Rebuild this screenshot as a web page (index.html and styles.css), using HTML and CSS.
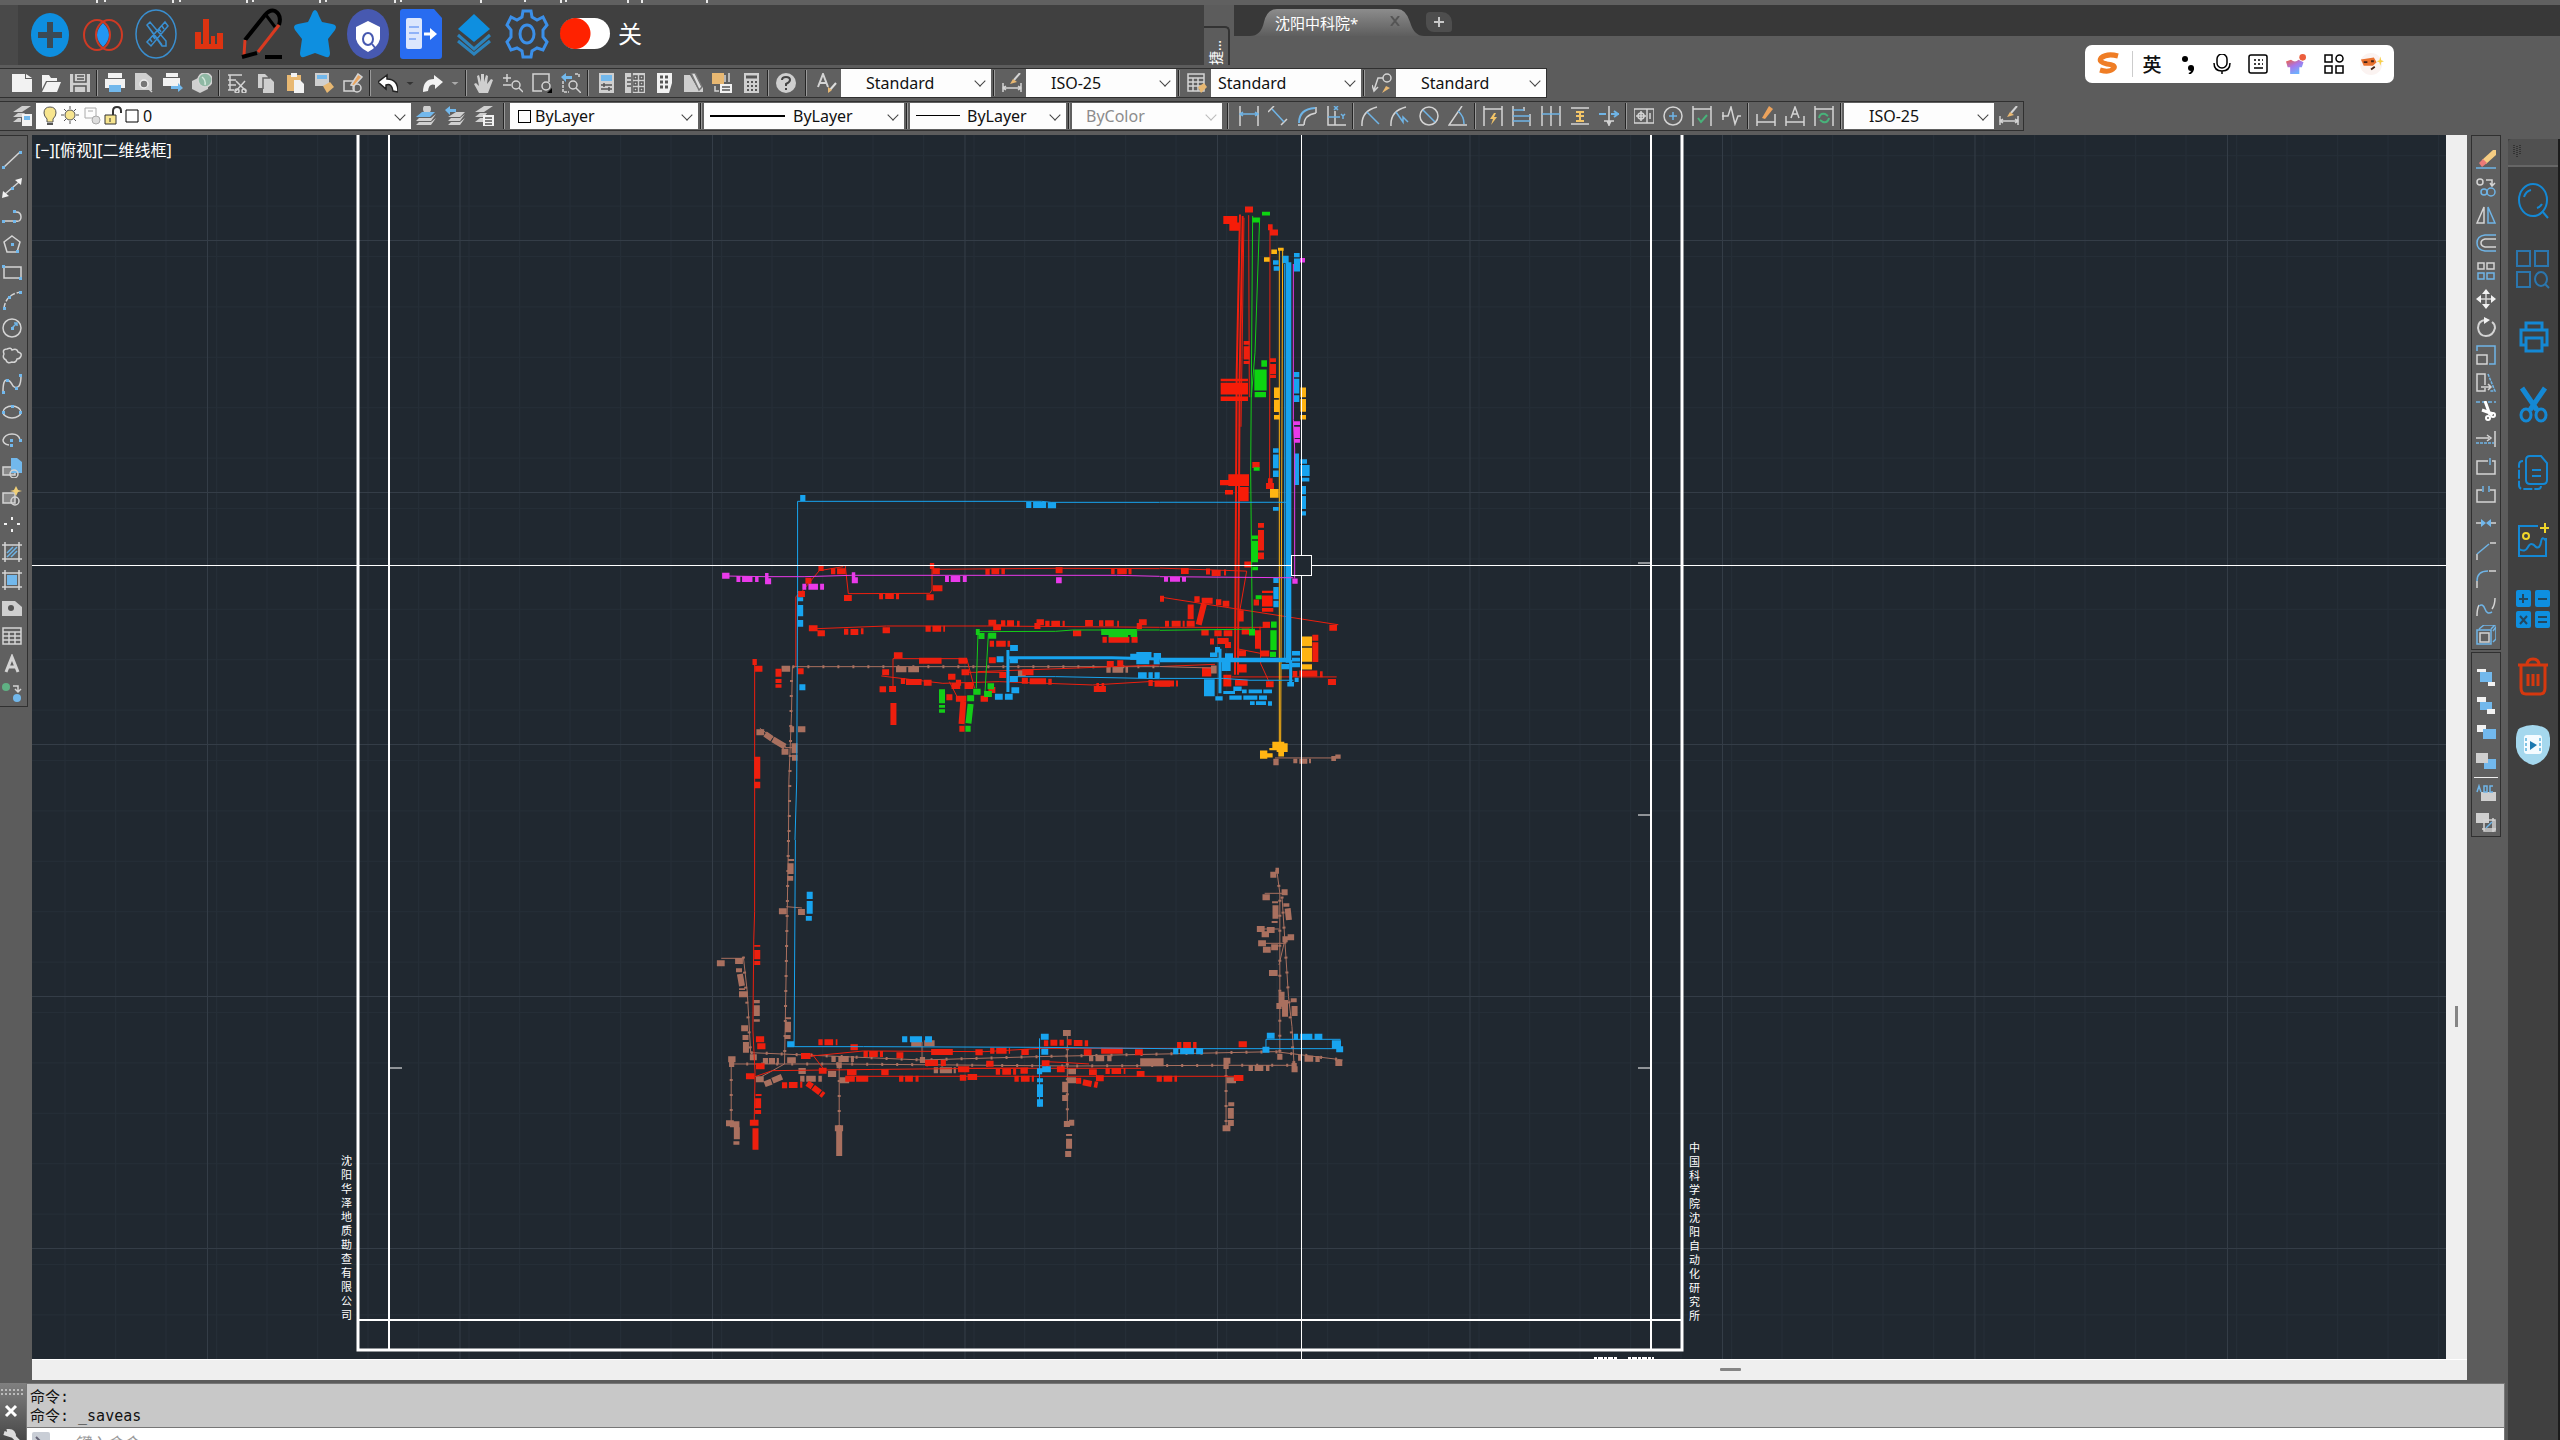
FILE: index.html
```html
<!DOCTYPE html>
<html lang="zh-CN">
<head>
    <meta charset="UTF-8">
    <meta name="viewport" content="width=device-width, initial-scale=1.0">
    <title>沈阳中科院</title>
    <link rel="stylesheet" href="styles.css">
</head>
<body>
    <div class="menu-edge">
        <svg width="720" height="5"><path d="M97 0v3M105 0v2M173 0v3M180 0v2M247 0v3M253 0v2M320 0v3M326 0v2M395 0v3M401 0v2M481 0v3M525 0v2M561 0v3M566 0v2M628 0v3M642 0v3M707 0v3"/></svg>
    </div>

    <header class="top">
        <div class="grip"></div>
        <nav class="quick">
            <button aria-label="新建"><svg viewBox="0 0 42 50"><ellipse cx="21" cy="26" rx="19" ry="22" fill="#0e8fe0"/><path d="M21 13v26M9 26h24" stroke="#3b4a55" stroke-width="6"/></svg></button>
            <button aria-label="交集"><svg viewBox="0 0 42 50"><path d="M21 14c8 8 8 16 0 24c-8-8-8-16 0-24z" fill="#2196f3"/><g stroke="#cf3a24" stroke-width="2"><ellipse cx="15" cy="26" rx="13" ry="15"/><ellipse cx="27" cy="26" rx="13" ry="15"/></g></svg></button>
            <button aria-label="设计"><svg viewBox="0 0 42 50" stroke="#3a8fd0" stroke-width="1.5"><ellipse cx="21" cy="25" rx="20" ry="24"/><path d="M12 16l3-3l16 19v5h-4zM12 16l15 20M30 13l3 4l-17 20l-4-4zM27 17l2 3M24 20l2 3M18 27l2 3M15 30l2 3"/></svg></button>
            <button aria-label="统计"><svg viewBox="0 0 42 50" fill="#dd3311"><path d="M7 23h6v12h2V10h6v25h2V27h4v8h2V24h6v16H7z"/></svg></button>
            <button aria-label="画笔"><svg viewBox="0 0 42 50" stroke-width="4"><path d="M4 31L24 6Q29 0 34 2Q41 6 38 16" stroke="#000"/><path d="M25 6l9 12" stroke="#000" stroke-width="3"/><path d="M4 31L3 46M38 16L17 43" stroke="#d93a20" stroke-width="3"/><path d="M1 48l15-4M24 48h17" stroke="#000"/></svg></button>
            <button aria-label="收藏"><svg viewBox="0 0 42 50" fill="#0e8fe0"><path d="M21 1Q23 1 25 7L28 13L38 15Q44 16 41 21L34 30L36 44Q36 49 32 48L21 44L10 48Q6 49 6 44L8 30L1 21Q-2 16 4 15L14 13L17 7Q19 1 21 1z"/></svg></button>
            <button aria-label="安全查询"><svg viewBox="0 0 42 50"><ellipse cx="21" cy="25" rx="21" ry="25" fill="#4759b0"/><path d="M21 12l12 6v12q-2 8-12 13q-10-5-12-13V18z" fill="#fff"/><ellipse cx="21" cy="30" rx="5" ry="6" stroke="#4759b0" stroke-width="2"/><path d="M25 35l4 5" stroke="#4759b0" stroke-width="2"/></svg></button>
            <button aria-label="导出"><svg viewBox="0 0 42 50"><path d="M3 0h31l8 9v38q0 3-3 3H3q-3 0-3-3V3q0-3 3-3z" fill="#286cf0"/><rect x="6" y="9" width="16" height="31" rx="2" fill="#dbe6fd"/><path d="M9 18h10M9 24h10M9 30h7" stroke="#8fb2f8" stroke-width="2"/><path d="M24 25h7" stroke="#fff" stroke-width="3"/><path d="M30 19l7 6l-7 6z" fill="#fff"/></svg></button>
            <button aria-label="图层"><svg viewBox="0 0 42 50"><path d="M21 5l16 15l-16 13L5 20z" fill="#0e8fe0"/><path d="M5 26l16 14l16-14M5 32l16 13l16-13" stroke="#2b83bd" stroke-width="3"/></svg></button>
            <button aria-label="设置"><svg viewBox="0 0 42 50" stroke="#3b8fe8" stroke-width="3"><ellipse cx="21" cy="25" rx="7" ry="9"/><path d="M17 2h8l1 6l5 3l6-3l4 8l-4 5v7l4 5l-4 8l-6-2l-5 3l-1 6h-8l-1-6l-5-3l-6 2l-4-8l4-5v-7l-4-5l4-8l6 3l5-3z"/></svg></button>
            <label class="switch"><input type="checkbox" role="switch"><span class="track"></span>关</label>
        </nav>
        <div class="side-tab"><span>捷…</span></div>
        <div class="files">
            <div class="file-strip">
                <a class="file-tab" href="#">
                    <svg class="tab-shape" viewBox="0 0 174 27" preserveAspectRatio="none"><defs><linearGradient id="tabfill" x2="0" y2="1"><stop offset="0" stop-color="#8c8c8c"/><stop offset="1" stop-color="#5e5e5e"/></linearGradient></defs><path d="M0 27Q11 27 14 13Q17 0 27 0H147Q156 0 160 13Q164 27 174 27z" fill="url(#tabfill)"/></svg>
                    <span>沈阳中科院*</span>
                </a>
                <button class="close" aria-label="关闭"><svg viewBox="0 0 10 10"><path d="M1 0l8 10M9 0l-8 10" stroke="#555" stroke-width="2"/></svg></button>
                <button class="plus" aria-label="新图形"><svg viewBox="0 0 12 12"><path d="M6 1v10M1 6h10" stroke="#c8c8c8" stroke-width="2"/></svg></button>
            </div>
        </div>
    </header>

    <div class="ime">
        <button class="logo" aria-label="搜狗"><svg viewBox="0 0 24 22"><path d="M21 3Q10 0 4 5Q1 9 10 11Q19 12 17 15Q13 20 3 17" stroke="#ef7d25" stroke-width="5"/></svg></button>
        <button class="lang">英</button>
        <button class="narrow" aria-label="标点"><svg viewBox="0 0 20 20"><g fill="#000"><circle cx="7" cy="5" r="3"/><circle cx="13" cy="14" r="3"/></g><path d="M15 14q0 4-4 6" stroke="#000" stroke-width="2"/></svg></button>
        <button class="narrow" aria-label="语音"><svg viewBox="0 0 20 20" stroke="#000" stroke-width="1.5"><rect x="5" y="0" width="10" height="14" rx="5"/><path d="M2 9q0 8 8 8t8-8M10 17v3"/></svg></button>
        <button aria-label="键盘"><svg viewBox="0 0 20 20" stroke="#000" stroke-width="1.5"><rect x="1" y="1" width="18" height="18" rx="2"/><path d="M6 6h9M6 10h9" stroke-dasharray="2"/><path d="M6 14h9"/></svg></button>
        <button aria-label="皮肤"><svg viewBox="0 0 24 24"><defs><linearGradient id="shirt" x2="0.6" y2="1"><stop offset="0" stop-color="#f0603c"/><stop offset=".5" stop-color="#a877ea"/><stop offset="1" stop-color="#6ab4ff"/></linearGradient></defs><path d="M6 7q5 4 9 0l6 3l-2 6h-3v8H5v-8H2L0 9z" fill="url(#shirt)"/><circle cx="20" cy="4" r="4" fill="#ec5e3c"/></svg></button>
        <button aria-label="工具"><svg viewBox="0 0 20 20" stroke="#000" stroke-width="1.5"><path d="M1 1h7v7H1zM1 12h7v7H1zM12 12h7v7h-7z"/><circle cx="15.500" cy="4.500" r="3.500"/></svg></button>
        <button aria-label="助手"><svg viewBox="0 0 26 26"><circle cx="12" cy="13" r="12" fill="#fbf3f1"/><path d="M1 8l14-2l3 5l-4 4H4z" fill="#e8702e"/><path d="M4 11h4M12 10h3M12 19l4-3" stroke="#402015" stroke-width="2"/><path d="M22 5l1 4l3 1l-3 1l-1 4l-1-4l-3-1l3-1z" fill="#f7cf4a"/></svg></button>
    </div>

    <div class="toolbars">
        <div class="bar bar-standard">
            <button aria-label="新建"><svg viewBox="0 0 20 20"><path class="f" d="M0 1h13v5h7v13H0z"/><path class="f" d="M14 1l6 4h-6z"/></svg></button>
            <button aria-label="打开"><svg viewBox="0 0 20 20"><path class="f" d="M1 2h7l2 3h6v3H5L1 16z"/><path class="f" d="M6 9h14l-4 10H1z"/></svg></button>
            <button aria-label="保存"><svg viewBox="0 0 20 20"><path class="g" d="M0 1h20v18H0z"/><path d="M4 1v8h12V1M7 3h7M7 6h7M4 19v-6h12v6" stroke="#555"/></svg></button>
            <i class="sep"></i>
            <button aria-label="打印"><svg viewBox="0 0 20 20"><path class="f" d="M3 0h14v5H3zM0 6h20v9H0z"/><path class="bf" d="M4 12h12v7H4z"/></svg></button>
            <button aria-label="打印预览"><svg viewBox="0 0 20 20"><path class="g" d="M1 0h11l6 5v12H1z"/><circle cx="10" cy="11" r="4" stroke="#eee" fill="#777"/><path d="M13 14l5 5"/></svg></button>
            <button aria-label="发布"><svg viewBox="0 0 20 20"><path class="f" d="M3 0h12v4H3zM0 5h17v8H0z"/><path class="bf" d="M8 13h7v-3l5 5l-5 4v-3H8z"/></svg></button>
            <button aria-label="三维打印"><svg viewBox="0 0 20 20"><path class="g" d="M0 8l8-4l8 4v8l-8 4l-8-4z"/><circle cx="13" cy="7" r="7" fill="#8fb8a4"/><path d="M10 4q4 3 3 8" stroke="#d4e8dc"/></svg></button>
            <i class="sep"></i>
            <button aria-label="剪切"><svg viewBox="0 0 20 20"><path d="M1 2h14M1 7h8M1 12h8M1 17h6M3 2v15M9 8l10 10M18 8L9 18"/><circle cx="10" cy="18" r="2"/><circle cx="17" cy="18" r="2"/></svg></button>
            <button aria-label="复制"><svg viewBox="0 0 20 20"><path class="g" d="M2 1h7l3 3v11H2z"/><path class="g" d="M7 5h7l4 4v11H7z"/><path d="M7 16V5h7" stroke="#666"/></svg></button>
            <button aria-label="粘贴"><svg viewBox="0 0 20 20"><path class="o" d="M2 2h14v16H2z"/><path class="f" d="M6 0h6v4H6zM9 7h6l4 4v9H9z"/></svg></button>
            <button aria-label="特性匹配"><svg viewBox="0 0 20 20"><path class="g" d="M1 0h14v13H1z"/><path class="bf" d="M3 2h10v4H3z"/><path class="o" d="M9 13l7-4l4 5l-7 6z"/></svg></button>
            <button aria-label="块编辑器"><svg viewBox="0 0 20 20"><path d="M1 18V8h10v10z"/><circle cx="14" cy="15" r="4"/><path d="M8 12l7-11l4 3l-8 9z" fill="#e9a560"/></svg></button>
            <i class="sep"></i>
            <button aria-label="放弃"><svg viewBox="0 0 20 20"><path d="M9 2L0 9l8 7v-4q6-2 7 6l5 1Q20 6 9 6z" fill="#fff" stroke="#222"/></svg></button>
            <button class="drop" aria-label="放弃列表"><svg viewBox="0 0 20 20"><path d="M3 8h14l-7 6z" fill="#333" stroke="none"/></svg></button>
            <button aria-label="重做"><svg viewBox="0 0 20 20"><path class="f" d="M11 2l9 7l-8 7v-4q-6-2-7 6l-5 1Q0 6 11 6z"/></svg></button>
            <button class="drop" aria-label="重做列表"><svg viewBox="0 0 20 20"><path d="M3 8h14l-7 6z" fill="#aaa" stroke="none"/></svg></button>
            <i class="sep"></i>
            <button aria-label="平移"><svg viewBox="0 0 20 20"><path class="g" d="M5 20L0 11l2-1l3 3L3 3l2-1l2 7V1h3v8l2-7l2 1l-1 8l4-5l2 1l-5 13z"/></svg></button>
            <button aria-label="实时缩放"><svg viewBox="0 0 20 20"><path d="M0 5h8M4 1v8M0 12h8"/><circle cx="13" cy="12" r="4"/><path d="M16 15l4 4"/></svg></button>
            <button aria-label="窗口缩放"><svg viewBox="0 0 20 20"><path d="M17 9V1H1v17h9"/><circle cx="14" cy="13" r="4"/><path d="M15 20h5v-5z" fill="#000" stroke="none"/></svg></button>
            <button aria-label="缩放上一个"><svg viewBox="0 0 20 20"><path d="M2 8v11h6M14 1h4v4" stroke-dasharray="3 1"/><path class="bf" d="M0 4l5-4v3h6v3H5v3z"/><circle cx="12" cy="12" r="4"/><path d="M15 15l5 5"/></svg></button>
            <i class="sep"></i>
            <button aria-label="特性"><svg viewBox="0 0 20 20"><path class="g" d="M3 0h15v20H3z"/><path class="bf" d="M5 2h11v6H5z"/><path d="M5 12h11M5 16h11M8 10v4M13 14v4" stroke="#555"/></svg></button>
            <button aria-label="设计中心"><svg viewBox="0 0 20 20"><path class="g" d="M0 0h20v20H0z"/><path d="M7 0v20M2 5h4M2 9h4M2 13h4M9 3h3v3H9zM15 3h3v3h-3zM9 9h3v3H9zM15 9h3v3h-3zM9 15h3v3H9zM15 15h3v3h-3z" stroke="#555"/></svg></button>
            <button aria-label="工具选项板"><svg viewBox="0 0 20 20"><path class="f" d="M3 0h15v10l-3 10H3z"/><path d="M6 4h3M11 4h3M6 9h3M11 9h3M6 14h3M11 14h3" stroke="#555" stroke-width="3"/></svg></button>
            <button aria-label="图纸集"><svg viewBox="0 0 20 20"><path class="g" d="M1 2h6l7 12h6v5H1z"/><path d="M8 0l4 0l7 14l-3 3z" fill="#ddd" stroke="#777"/></svg></button>
            <button aria-label="标记集"><svg viewBox="0 0 20 20"><path class="o" d="M0 0h12v11H0z"/><path class="f" d="M8 11h12v9H8z"/><path d="M10 14h8M10 17h8" stroke="#555"/><path d="M13 2v7M17 0v9M3 13v5h4"/></svg></button>
            <button aria-label="计算器"><svg viewBox="0 0 20 20"><path class="g" d="M3 0h15v20H3z"/><path d="M5 4h11" stroke="#555" stroke-width="3"/><path d="M6 9h10M6 13h10M6 17h10" stroke="#555" stroke-width="2" stroke-dasharray="2"/></svg></button>
            <i class="sep"></i>
            <button aria-label="帮助"><svg viewBox="0 0 20 20"><circle cx="10" cy="10" r="10" class="g"/><path d="M6 7q0-3 4-3t4 3q0 2-4 4v2M10 15v2" stroke="#444" stroke-width="2"/></svg></button>
            <i class="sep wide"></i>
            <button aria-label="文字样式"><svg viewBox="0 0 20 20"><path d="M1 14L6 1l5 13M3 10h6" stroke-width="2"/><path d="M12 18l7-8" stroke="#ddd" stroke-width="2"/><path class="o" d="M11 14l4 3l-4 3z"/></svg></button>
            <div class="combo"><select aria-label="文字样式"><option>Standard</option></select></div>
            <i class="sep"></i>
            <button aria-label="标注样式"><svg viewBox="0 0 20 20"><path d="M1 10v9M19 10v9M1 15h18M4 13l-3 2l3 2M16 13l3 2l-3 2"/><path d="M12 7l6-7" stroke-width="2"/><path class="o" d="M8 11l3-5l4 3z"/></svg></button>
            <div class="combo"><select aria-label="标注样式"><option>ISO-25</option></select></div>
            <i class="sep"></i>
            <button aria-label="表格样式"><svg viewBox="0 0 20 20"><path d="M1 1h16v17H1zM1 5h16M1 9h16M1 13h16M6 5v13M11 5v13"/><path class="o" d="M11 14l6-4l3 4l-6 6z"/></svg></button>
            <div class="combo near"><select aria-label="表格样式"><option>Standard</option></select></div>
            <i class="sep"></i>
            <button aria-label="引线样式"><svg viewBox="0 0 20 20"><circle cx="15" cy="5" r="4"/><path d="M11 5H6L2 17M0 12l2 6l4-4"/><path class="o" d="M10 20l4-7l4 2z"/></svg></button>
            <div class="combo"><select aria-label="多重引线样式"><option>Standard</option></select></div>
        </div>

        <div class="bar bar-layer">
            <button aria-label="图层特性"><svg viewBox="0 0 20 20"><path class="g" d="M1 6l9-6h9l-9 6zM1 11l5-4h7l-3 4zM1 16l5-4h3v4z"/><path class="f" d="M10 8h10v12H10z"/><path class="bf" d="M12 10h6v4h-6z"/></svg></button>
            <div class="combo layers">
                <select aria-label="图层"><option>0</option></select>
                <svg class="layer-state" viewBox="0 0 96 22"><path d="M7 2q6 0 6 6q0 3-3 6v3H4v-3Q1 11 1 8q0-6 6-6z" fill="#f7e58f" stroke="#555"/><path d="M4 19h6" stroke="#555" stroke-width="2"/><circle cx="27" cy="10" r="5" fill="#f7e58f" stroke="#555"/><path d="M27 1v3M27 16v3M18 10h3M33 10h3M21 4l2 2M31 14l2 2M33 4l-2 2M23 14l-2 2" stroke="#555"/><path d="M42 3h11v10H42zM45 6h5" stroke="#aaa" fill="none"/><circle cx="53" cy="15" r="4" fill="#ddd" stroke="#aaa"/><path d="M62 10h11v9H62z" fill="#f7e58f" stroke="#333"/><path d="M70 10V6q0-4 4-4t4 4v2" fill="none" stroke="#333" stroke-width="2"/><path d="M67 13v4" stroke="#333"/><path d="M83 5h12v12H83z" fill="#fff" stroke="#000"/></svg>
            </div>
            <button aria-label="置为当前"><svg viewBox="0 0 20 20"><circle cx="11" cy="3" r="4" class="g"/><path class="bf" d="M0 11l6-5h13l-5 5z"/><path class="g" d="M0 15l3-3h12l5-4l-5 7zM0 19l3-3h12l5-4l-5 7z"/></svg></button>
            <button aria-label="上一个图层"><svg viewBox="0 0 20 20"><path class="bf" d="M0 4l5-4v3h6v3H5v3z"/><path class="g" d="M3 11l8-5h9l-5 5zM3 15l3-3h9l5-4l-5 7zM3 19l3-3h9l5-4l-5 7z"/></svg></button>
            <button aria-label="图层状态"><svg viewBox="0 0 20 20"><path class="g" d="M1 6l9-6h9l-9 6zM1 11l5-4h7l-3 4zM1 16l5-4h3v4z"/><path class="f" d="M9 9h11v11H9z"/><path d="M11 12h7M11 15h7M11 18h7" stroke="#555"/></svg></button>
            <i class="sep wide"></i>
            <div class="combo color"><select aria-label="颜色"><option>ByLayer</option></select><span class="swatch"></span></div>
            <i class="sep"></i>
            <div class="combo linetype"><select aria-label="线型"><option>ByLayer</option></select><span class="stroke"></span></div>
            <i class="sep"></i>
            <div class="combo weight"><select aria-label="线宽"><option>ByLayer</option></select><span class="stroke"></span></div>
            <i class="sep"></i>
            <div class="combo plot"><select aria-label="打印样式" disabled><option>ByColor</option></select></div>
            <i class="sep wide"></i>
            <button aria-label="线性"><svg viewBox="0 0 20 20"><path d="M1 0v20M19 0v20"/><path class="b" d="M1 8h18M4 6L1 8l3 2M16 6l3 2l-3 2"/></svg></button>
            <button aria-label="对齐"><svg viewBox="0 0 20 20"><path d="M0 6l6-6M13 19l6-6"/><path class="b" d="M4 3l12 13"/></svg></button>
            <button aria-label="弧长"><svg viewBox="0 0 20 20"><path d="M1 19h6M19 1v6M7 19Q7 9 19 7"/><path class="b" d="M2 17Q2 3 18 2" stroke-width="2"/></svg></button>
            <button aria-label="坐标"><svg viewBox="0 0 20 20"><path d="M2 0v19h18M9 5v14"/><path class="b" d="M2 11h12M8 0l4 4M12 0L8 4M15 8l2 2l2-2M17 10v3"/></svg></button>
            <i class="sep"></i>
            <button aria-label="半径"><svg viewBox="0 0 20 20"><path d="M1 20Q0 5 16 1"/><path class="b" d="M18 18L6 6"/></svg></button>
            <button aria-label="折弯"><svg viewBox="0 0 20 20"><path d="M1 20Q0 5 16 1"/><path class="b" d="M18 16l-5-5v5L6 6"/></svg></button>
            <button aria-label="直径"><svg viewBox="0 0 20 20"><circle cx="10" cy="10" r="9"/><path class="b" d="M4 4l12 12"/></svg></button>
            <button aria-label="角度"><svg viewBox="0 0 20 20"><path d="M14 0L1 19h18"/><path class="b" d="M10 5q6 5 6 13"/></svg></button>
            <i class="sep"></i>
            <button aria-label="快速标注"><svg viewBox="0 0 20 20"><path d="M1 0v20M19 0v20M1 3h18"/><path d="M11 7l-4 6h3l-2 6l6-8h-3l2-4z" fill="#f3c568" stroke="none"/></svg></button>
            <button aria-label="基线"><svg viewBox="0 0 20 20"><path d="M1 0v20M18 8v12M12 1v4"/><path class="b" d="M1 4h11M1 10h17M1 15h17"/></svg></button>
            <button aria-label="连续"><svg viewBox="0 0 20 20"><path d="M1 0v20M10 0v20M19 0v20"/><path class="b" d="M1 8h18"/></svg></button>
            <button aria-label="标注间距"><svg viewBox="0 0 20 20"><path d="M1 2h18M1 18h18"/><path d="M6 6h8M10 6v9M6 15h8M6 10h8" stroke="#f3c568" stroke-width="2"/></svg></button>
            <button aria-label="标注打断"><svg viewBox="0 0 20 20"><path d="M10 0v20M5 15h10M8 15l2 4l2-4"/><path class="b" d="M0 8h7M12 8h8M15 5l4 3l-4 3" stroke-width="2"/></svg></button>
            <i class="sep"></i>
            <button aria-label="公差"><svg viewBox="0 0 20 20"><path d="M0 3h20v14H0zM13 3v14M16 7v6"/><circle cx="7" cy="10" r="3"/><path d="M7 5v10M2 10h10"/></svg></button>
            <button aria-label="圆心标记"><svg viewBox="0 0 20 20"><circle cx="10" cy="10" r="9"/><path class="b" d="M10 6v8M6 10h8"/></svg></button>
            <button aria-label="检验"><svg viewBox="0 0 20 20"><path d="M1 0v20M19 0v20M1 3h18"/><path d="M6 12l3 4l6-7" stroke="#48b27a" stroke-width="2"/></svg></button>
            <button aria-label="折弯线性"><svg viewBox="0 0 20 20"><path d="M1 10h6l3-9l4 17l3-8h3"/><path d="M2 6v8"/></svg></button>
            <i class="sep"></i>
            <button aria-label="编辑标注"><svg viewBox="0 0 20 20"><path d="M1 8v12M19 8v12M1 16h18"/><path d="M6 12L13 0l4 3l-8 10z" fill="#eda35c" stroke="none"/></svg></button>
            <button aria-label="编辑标注文字"><svg viewBox="0 0 20 20"><path d="M1 10v10M19 10v10M1 16h18M6 12l4-11l4 11M7 8h6"/></svg></button>
            <button aria-label="标注更新"><svg viewBox="0 0 20 20"><path d="M1 0v20M19 0v20M1 3h18"/><path d="M5 12q1-5 6-4l3 2M15 12q-1 5-6 4l-3-2" stroke="#48b27a" stroke-width="2"/></svg></button>
            <i class="sep"></i>
            <div class="combo"><select aria-label="当前标注样式"><option>ISO-25</option></select></div>
            <button aria-label="标注样式管理"><svg viewBox="0 0 20 20"><path d="M1 10v9M19 10v9M1 15h18M4 13l-3 2l3 2M16 13l3 2l-3 2"/><path d="M12 7l6-7" stroke-width="2"/><path class="o" d="M8 11l3-5l4 3z"/></svg></button>
        </div>
    </div>

    <div class="lower">
        <div class="left-part">
            <div class="workspace">
                <div class="draw-side">
                    <div class="vbar vbar-draw">
                        <button aria-label="直线"><svg viewBox="0 0 20 20"><path d="M1 18L18 2"/><path class="bf" d="M0 16h3v3H0zM17 1h3v3h-3z"/></svg></button>
                        <button aria-label="构造线"><svg viewBox="0 0 20 20"><path d="M3 16L17 4"/><path class="f" d="M0 20l1-7l6 5zM20 0l-1 7l-6-5z"/><path class="bf" d="M9 9h3v3H9z"/></svg></button>
                        <button aria-label="多段线"><svg viewBox="0 0 20 20"><path d="M3 15h10M14 6q5 0 5 5t-5 4"/><path class="bf" d="M0 14h3v3H0zM11 14h3v3h-3zM11 4h3v3h-3z"/></svg></button>
                        <button aria-label="多边形"><svg viewBox="0 0 20 20"><path d="M10 2l8 6l-3 10H5L2 8z"/><path class="bf" d="M9 9h3v3H9zM14 16h3v3h-3z"/></svg></button>
                        <button aria-label="矩形"><svg viewBox="0 0 20 20"><path d="M2 5h17v11H2z"/><path class="bf" d="M0 3h3v3H0zM17 15h3v3h-3z"/></svg></button>
                        <button aria-label="圆弧"><svg viewBox="0 0 20 20"><path d="M2 18Q4 4 19 2" stroke-dasharray="5 2"/><path class="bf" d="M1 17h3v3H1zM6 6h3v3H6zM17 1h3v3h-3z"/></svg></button>
                        <button aria-label="圆"><svg viewBox="0 0 20 20"><circle cx="10" cy="10" r="9"/><path class="b" d="M10 10l5-5M12 5h3v3"/><path class="bf" d="M9 9h3v3H9z"/></svg></button>
                        <button aria-label="修订云线"><svg viewBox="0 0 20 20"><path d="M2 8q-2-5 3-5q4-2 5 1q5-2 6 2q4 1 3 4q-1 3-4 3q-1 4-5 3q-5 2-6-2q-4-2-2-6z"/></svg></button>
                        <button aria-label="样条曲线"><svg viewBox="0 0 20 20"><path d="M1 18Q1 5 5 6q3 0 6 6q3 3 6 0q2-3 2-10"/><path class="bf" d="M0 17h3v3H0zM4 5h3v3H4zM13 13h3v3h-3zM17 0h3v3h-3z"/></svg></button>
                        <button aria-label="椭圆"><svg viewBox="0 0 20 20"><ellipse cx="10" cy="10" rx="9" ry="6"/><path class="bf" d="M0 9h3v3H0zM17 9h3v3h-3zM9 3h3v3H9z"/></svg></button>
                        <button aria-label="椭圆弧"><svg viewBox="0 0 20 20"><path d="M18 10Q17 4 10 4T1 10q0 4 6 5"/><path class="bf" d="M17 9h3v3h-3zM8 9h3v3H8zM8 14h3v3H8z"/></svg></button>
                        <button aria-label="插入块"><svg viewBox="0 0 20 20"><path d="M1 9h12v8H1z" fill="#888"/><path class="bf" d="M9 0h6l5 4v11H9z"/><circle cx="12" cy="16" r="4"/></svg></button>
                        <button aria-label="创建块"><svg viewBox="0 0 20 20"><path d="M1 7h12v10H1z" fill="#888"/><circle cx="13" cy="15" r="4"/><path d="M14 0l2 4l4 1l-4 1l-2 4l-2-4l-4-1l4-1z" fill="#f0cf78" stroke="none"/></svg></button>
                        <button aria-label="点"><svg viewBox="0 0 20 20"><path class="f" d="M9 3h2v3H9zM2 9h3v2H2zM15 9h3v2h-3zM9 15h2v3H9z"/></svg></button>
                        <button aria-label="图案填充"><svg viewBox="0 0 20 20"><path d="M0 3h20M0 17h20M3 0v20M17 0v20"/><path class="b" d="M5 11l6-6M5 15L15 5M9 15l6-6"/></svg></button>
                        <button aria-label="渐变色"><svg viewBox="0 0 20 20"><path d="M0 3h20M0 17h20M3 0v20M17 0v20"/><path class="bf" d="M5 5h10v10H5z"/></svg></button>
                        <button aria-label="面域"><svg viewBox="0 0 20 20"><path class="g" d="M0 3h13l7 6v9H0z"/><circle cx="9" cy="10" r="3" fill="#555" stroke="none"/></svg></button>
                        <button aria-label="表格"><svg viewBox="0 0 20 20"><path d="M1 2h18v16H1zM1 6h18M1 10h18M1 14h18M7 6v12M13 6v12"/></svg></button>
                        <button aria-label="多行文字"><svg viewBox="0 0 20 20"><path d="M4 18L10 3l6 15M6 13h8" stroke-width="3"/></svg></button>
                        <button aria-label="添加选定对象"><svg viewBox="0 0 20 20"><circle cx="4" cy="5" r="4" fill="#5fb083" stroke="none"/><circle cx="15" cy="16" r="4" class="bf"/><path d="M11 4h5v5M13 7l3 3l3-3"/></svg></button>
                    </div>
                </div>

                <div class="view">
                    <div class="view-row">
                        <main class="canvas">
                            <div class="view-controls"><button>[−]</button><button>[俯视]</button><button>[二维线框]</button></div>
                            <svg class="plan">
                                <defs>
                                    <pattern id="minor" x="14" y="4" width="50.500" height="50.400" patternUnits="userSpaceOnUse"><path d="M0 0.500H51M0.500 0V51" stroke="#252e37" fill="none"/></pattern>
                                    <pattern id="major" x="207" y="240" width="252.500" height="252" patternUnits="userSpaceOnUse"><path d="M0 0.500H253M0.500 0V252" stroke="#343d47" fill="none"/></pattern>
                                </defs>
                                <g transform="translate(-32 -135)">
                                    <rect x="5" y="38" width="3000" height="2016" fill="url(#minor)"/>
                                    <rect width="3000" height="2000" fill="url(#major)"/>

                                    <!-- sheet frame -->
                                    <g class="frame">
                                        <path d="M358 100V1350H1682V100" stroke-width="3"/>
                                        <path d="M389 100V1350M358 1320H1682M1651 100V1350" stroke-width="2"/>
                                        <path d="M1638 563h13M1638 815h13M1638 1068h13M389 1068h13" stroke-width="1"/>
                                        <path d="M1594 1358h24M1628 1358h26" stroke-width="2" stroke-dasharray="3 1 5 1"/>
                                    </g>

                                    <!-- middle runs -->
                                    <g class="pipes" transform="translate(700 480) scale(.4337 .3333)">
                                        <path class="brown" d="M213 560H1060M213 560L211 700L205 900L204 1080M138 745L200 803M195 803H222"/>
                                        <path class="brown dots" d="M213 560H1060M211 600L205 1080"/>
                                        <path class="brown lab" d="M188 566h20M452 568h24M480 568h25M733 579h18M937 569h10M951 569h25M981 569h6M226 748h17M130 757h18M150 762l16 14M168 778l28 22M188 815h16M218 790v30M212 833h13M207 748h10"/>
                                        <path class="red" d="M126 546V1080M221 560V350L235 335L275 272L330 260M335 258L342 341L530 340L535 330V264L540 268L825 265L1060 266M270 446L430 438H660L1060 442M445 620V536H615L633 625M418 588L560 610L690 605L905 615L1060 603M640 575L1060 555M610 577H700M575 605L595 656"/>
                                        <path class="red lab" d="M273 264h12M302 274h10M316 274h20M243 302h14M225 342h17M332 354h18M413 349h9M427 348h20M452 349h7M522 352h17M537 325h22M536 274h17M658 275h10M672 274h18M695 274h8M820 271h16M948 274h8M962 274h22M988 274h7M530 258h10M251 445h20M271 460h17M332 455h10M347 456h18M371 454h6M421 451h17M520 446h12M536 446h20M561 446h4M665 428h18M676 442h18M694 430h10M708 430h16M731 431h6M776 427h17M771 438h14M796 431h10M810 431h20M836 431h5M888 429h18M860 460h19M920 430h10M934 430h20M962 431h4M1012 427h18M1007 438h12M928 479h10M942 479h48M995 479h14M668 491h10M683 491h22M709 491h6M127 566h17M181 566v24M181 597v12M181 613v10M225 574h14M447 526h20M505 542h52M596 542h20M666 541h16M420 577h16M414 628h15M436 627h16M463 603h10M475 606h36M516 608h18M603 577h18M572 590h17M590 608h12M580 618h20M610 618h20M690 585h16M743 577h26M742 602h14M760 604h38M803 605h8M568 652h14M590 656h24M647 656h17M665 630h16M914 618h6M926 618h6M908 627h28M938 552h16M962 550h14M1034 609h10M1048 611h36M446 669v66M607 665L603 732M598 746h12M132 830v66M132 905v20M121 546h10"/>
                                        <path class="cyan" d="M225 64H788L810 67H1060M225 64V340L223 900L219 1080M720 590H820L1060 596"/>
                                        <path class="cyan thick" d="M708 533H950L1060 537M710 510V636"/>
                                        <path class="cyan lab" d="M231 54h12M752 75h12M768 75h30M802 76h19M231 352v12M231 375v34M231 420v20M229 622h14M715 504h18M684 538h16M714 541h19M714 597h19M718 631h18M680 650h18M703 650h18M992 530h14M1006 525h35M1006 544h30M1046 528h17M1046 544h14M1010 586h20M1034 586h10M1048 586h12"/>
                                        <path class="magenta" d="M58 288L150 290H240L350 286H960L1060 289"/>
                                        <path class="magenta lab" d="M51 287h17M84 297h9M97 297h24M127 297h8M150 304h14M236 320h9M250 320h22M277 320h9M350 301h14M565 297h9M578 297h22M606 297h9M821 301h13M150 288h8M350 286h8"/>
                                        <path class="green" d="M641 457L637 625M665 460L657 640M640 455L820 454L860 450H1060"/>
                                        <path class="green lab" d="M642 468h14M665 467h18M925 456h82M942 463h45M993 462h15M630 635h17M655 642h18M663 619h15M616 655h16M558 628v42M558 675v8M558 688v10M624 672L619 730M612 746h12M636 456h9"/>
                                    </g>

                                    <!-- north trunk -->
                                    <g class="pipes" transform="translate(1160 190) scale(.3333 .37)">
                                        <path class="red double" d="M240 66L230 500L225 1310M248 70L239 500L234 1310"/>
                                        <path class="red" d="M252 75L243 640M266 68L268 560M330 100L329 790M0 1022L260 1030L235 1160M0 1100L535 1175M0 1182H330M300 1180L302 1280L330 1335M232 1240L300 1252M215 1316H530M0 1288L165 1282"/>
                                        <path class="red box" d="M190 70h42v22h-42zM208 88h30v22h-30zM182 510h82v7h-82zM182 521h82v32h-82zM182 558h82v12h-82zM205 768h62v32h-62zM180 784h30v14h-30zM236 803h30v38h-30zM195 811h24v12h-24zM306 1083h34v6h-34zM306 1096h32v30h-32zM306 1130h34v10h-34zM126 1290h28v25h-28zM232 1282h28v22h-28zM190 1310h24v32h-24z"/>
                                        <path class="red lab" d="M255 53h24M330 115h24M324 101h14M260 408v10M260 422v36M260 462v8M339 455v10M339 470v28M339 500v8M318 800h24M324 787h14M277 743h22M303 900v13M303 919v55M303 980v18M253 1012h20M63 1030h23M138 1031h12M155 1035h27M192 1034h6M281 1115h16M0 1105h12M103 1106h16M125 1110h33M168 1114h16M188 1118h20M132 1118L116 1175M92 1120v40M15 1172h12M35 1172h27M68 1172h6M80 1172h24M508 1183h23M124 1196h22M163 1198h22M191 1198h26M245 1193h22M308 1175h22M150 1220h12M172 1219h34M195 1230h18M294 1190v50M232 1252h26M300 1253h28M225 1332h38M318 1336h23M398 1308h14M418 1307h54M480 1309h8M504 1330h24M466 1202v16M466 1222v54M242 1136v30M0 1334h42M48 1334h6"/>
                                        <path class="green" d="M278 70L272 760L277 1195M299 75L285 440L274 560M0 1190L270 1187"/>
                                        <path class="green box" d="M277 74h22v14h-22zM306 59h24v10h-24zM283 485h37v57h-37zM284 546h34v14h-34zM304 460h17v18h-17zM281 749h18v10h-18zM274 934h20v10h-20zM274 948h20v58h-20zM277 1018h17v10h-17zM287 1095h18v11h-18zM333 1166h17v17h-17zM331 1190h19v53h-19zM330 1248h18v14h-18zM267 1186h18v18h-18z"/>
                                        <path class="yellow" d="M358 160V1500M368 160L362 1500"/>
                                        <path class="yellow box" d="M334 161h17v12h-17zM312 182h17v12h-17zM354 156h17v8h-17zM342 534h17v28h-17zM342 567h17v33h-17zM342 608h17v12h-17zM421 534h17v26h-17zM421 565h17v34h-17zM421 608h17v12h-17zM330 808h26v24h-26zM426 1207h30v26h-30zM424 1237h32v38h-32zM426 1282h30v14h-30zM337 1491h36v20h-36zM350 1495h33v24h-33zM355 1515h17v16h-17zM300 1515h22v22h-22zM320 1522h18v12h-18zM328 1508h30v6h-30z"/>
                                        <path class="cyan" d="M0 844H378M0 1320H190L270 1325H400M374 200V1270"/>
                                        <path class="cyan thick" d="M0 1268H380M0 1272H380M180 1240V1360M392 1270V1335"/>
                                        <path class="cyan box" d="M377 195h17v1083h-17zM368 178h18v20h-18zM402 170h17v12h-17zM402 185h18v35h-18zM339 190h17v12h-17zM341 206h17v12h-17zM402 492h16v14h-16zM402 510h16v40h-16zM402 555h16v18h-16zM339 698h17v12h-17zM339 715h17v37h-17zM339 758h17v18h-17zM403 712h14v85h-14zM421 728h20v12h-20zM421 743h28v30h-28zM426 778h22v10h-22zM426 800h12v22h-12zM426 827h12v35h-12zM426 868h12v12h-12zM339 857h17v10h-17zM340 1048h16v14h-16zM340 1073h16v33h-16zM340 1110h16v18h-16zM165 1235h15v15h-15zM150 1250h22v12h-22zM195 1252h24v20h-24zM185 1275h27v25h-27zM396 1246h24v12h-24zM396 1264h24v10h-24zM392 1278h28v12h-28zM364 1281h24v14h-24zM404 1318h12v12h-12zM382 1330h20v12h-20zM132 1322h32v46h-32zM166 1368h22v12h-22zM190 1354h35v8h-35zM220 1342h25v12h-25zM246 1350h14v10h-14zM266 1350h40v10h-40zM310 1350h26v10h-26zM208 1366h37v12h-37zM250 1366h42v12h-42zM297 1366h24v12h-24zM270 1382h14v10h-14zM288 1382h30v10h-30zM324 1382h12v12h-12z"/>
                                        <path class="magenta" d="M400 200V620L404 700V1050M0 1045L400 1048"/>
                                        <path class="magenta box" d="M420 184h15v12h-15zM402 625h18v10h-18zM402 640h18v30h-18zM402 673h18v10h-18zM397 1050h16v14h-16zM12 1046h12v13h-12zM30 1045h30v14h-30zM66 1046h12v13h-12z"/>
                                        <path class="brown" d="M345 1535H520M0 1288L160 1292"/>
                                        <path class="brown box" d="M340 1537h16v18h-16zM400 1537h12v12h-12zM418 1537h24v14h-24zM447 1537h6v12h-6zM514 1530h14v13h-14zM526 1526h16v11h-16zM153 1285h17v22h-17z"/>
                                    </g>

                                    <!-- south and west runs -->
                                    <g class="pipes" transform="translate(690 840) scale(.4337 .3333)">
                                        <path class="brown" d="M227 0L218 672M222 200L258 204M123 350L132 455L140 640M72 355H123M140 638L535 660L800 650L1350 635L1505 660M95 672H340L870 678L1235 676H1395M95 672V845M344 675V860M870 580V860M1236 660V860M535 605V660M218 672L165 710M1353 90L1360 160V640M1365 170L1380 470L1388 560L1393 680M1372 298L1358 375M1325 160h40M1320 267h38M1320 310h50"/>
                                        <path class="brown dots" d="M227 0L218 672M123 350L140 640M140 638L535 660L800 650L1350 635L1505 660M95 672H340L870 678L1235 676H1395M95 672V845M344 675V860M870 580V860M1236 660V860M1353 90L1360 160V640M1365 170L1380 470L1393 680"/>
                                        <path class="brown lab" d="M233 57v6M232 70v32M231 108v14M205 214h18M249 216h16M62 370h18M104 363h18M113 385v12M115 402L120 438M120 445v5M113 463h20M154 480v10M154 496v32M154 538v7M118 565h16M128 585v15M129 606v32M226 532v6M226 545v32M225 585v12M88 658h17M90 672h12M138 652h16M168 663h12M182 663h14M200 663h5M224 661h20M326 657h10M342 657h24M371 657h7M510 611h24M540 610h24M530 660h12M860 579h18M250 693h17M318 702h19M152 718h18M172 733l16-8M190 722l22-12M254 716h10M268 716h22M296 716h8M562 691h10M576 691h28M608 691h5M345 721h22M338 676h12M872 694h18M870 721h20M865 725v32M865 765v18M920 655h10M935 655h20M962 655h10M1038 664h54M1038 670h54M1230 662h16M1288 684h10M1302 684h20M1328 684h8M1237 721h22M1230 678h12M1248 787v12M1247 804v32M1240 849h14M1228 865h18M874 848h12M862 852h14M874 882v6M874 896v30M865 942h14M334 865h19M344 872v76M83 850h18M92 853h22M108 862v36M107 904v10M1338 104h14M1350 92h8M1364 157h14M1320 172h17M1349 184v6M1350 196v40M1348 243v6M1375 190v10M1378 205L1381 240M1307 267h18M1318 283h17M1330 270h18M1378 292h15M1366 298h12M1310 310h18M1340 322h16M1321 329h18M1335 399h20M1364 455v45M1372 480v50M1392 475v12M1394 498v30M1352 498h12M1354 650h12M1387 688h14M1387 678h12M1402 653h8M1417 656h20M1442 657h10M1488 669h16"/>
                                        <path class="red" d="M149 0V215L147 300L145 570L150 700L148 850M265 650L400 633L680 635L810 625H1170M150 710L190 692L450 688L780 684M370 709H1260M620 685H1040M820 665L870 668L920 672M280 640L310 690"/>
                                        <path class="red lab" d="M155 315v5M155 330v28M155 363v12M152 598h19M155 619h19M152 679h20M129 709h20M158 762v6M157 775v30M157 810v12M138 848h20M151 865v64M296 607h10M310 607h20M336 607h4M370 622h17M256 648h22M400 642h10M413 642h20M438 642h7M476 646h16M556 636h50M658 637h17M692 632h10M706 632h24M735 632h3M764 636h17M816 610h10M831 608h16M852 608h10M870 607h10M885 609h20M910 610h8M908 637h18M948 632h50M1026 637h18M1123 615h10M1137 615h18M1160 615h8M1265 613h19M542 669h30M578 669h12M683 671h17M811 670h18M846 688h18M297 692h18M362 697h22M441 697h17M618 688h26M640 711h22M622 713h15M705 695h10M720 695h20M745 695h7M762 692h17M920 697h18M958 693h10M972 693h22M1000 693h4M1030 702h18M358 716h22M383 716h28M482 716h10M496 716h18M520 716h7M748 716h10M763 716h20M788 716h5M890 722h12M906 727l20 5M932 733l8 2M936 715h18M1076 716h12M1092 716h20M1117 716h6M1254 714h22M270 730l12 10M284 742l16 16M302 760l6 6M212 736h12M228 735h20M254 734h5"/>
                                        <path class="cyan" d="M243 0L240 620H400L800 622L1100 626H1500M1328 598H1500M1328 598V630M806 595V800"/>
                                        <path class="cyan lab" d="M276 155v22M276 183v38M274 228v14M224 613h16M489 598h12M507 598h28M542 598h16M809 590h18M810 635h16M812 688h20M800 694h12M807 715v12M807 733v38M807 778v22M1114 634h12M1130 634h32M1167 634h16M1330 587h18M1320 629h16M1392 590h10M1407 590h28M1440 590h18M1480 610h21M1480 617h21M1490 628h16"/>
                                    </g>

                                    <!-- crosshair -->
                                    <g class="cross"><path d="M1301.500 100V555M1301.500 576V1400M0 565.500H1291M1312 565.500H2600"/><rect x="1291.500" y="555.500" width="20" height="20"/></g>
                                </g>
                            </svg>
                            <p class="sheet-name sheet-left">沈阳华泽地质勘查有限公司</p>
                            <p class="sheet-name sheet-right">中国科学院沈阳自动化研究所</p>
                        </main>
                        <div class="vscroll"><span></span></div>
                    </div>
                    <div class="hscroll"><span></span></div>
                </div>

                <div class="modify-side">
                    <div class="vbar vbar-modify">
                        <button aria-label="删除"><svg viewBox="0 0 20 20"><path class="b" d="M0 19h20"/><path d="M6 11L17 1h3v5L10 15z" fill="#f6cd82" stroke="none"/><path d="M3 14l4-4l4 4l-5 4z" fill="#ec7a78" stroke="none"/></svg></button>
                        <button aria-label="复制对象"><svg viewBox="0 0 20 20"><circle cx="4" cy="5" r="3"/><path d="M10 3h6v5M14 6l2 3l3-3"/><g class="b"><circle cx="8" cy="15" r="3"/><circle cx="15" cy="15" r="4"/></g></svg></button>
                        <button aria-label="镜像"><svg viewBox="0 0 20 20"><path d="M8 2v16H1z"/><path class="b" d="M12 2v16h7z"/></svg></button>
                        <button aria-label="偏移"><svg viewBox="0 0 20 20"><path class="b" d="M20 2H9Q1 3 1 10t8 8h11"/><path d="M20 6H9q-4 1-4 4t4 4h11"/></svg></button>
                        <button aria-label="阵列"><svg viewBox="0 0 20 20"><path d="M2 2h6v6H2zM11 2h7v6h-7z"/><path class="b" d="M2 12h6v6H2zM11 12h7v6h-7z"/></svg></button>
                        <button aria-label="移动"><svg viewBox="0 0 20 20"><path d="M2 10h16M10 2v16"/><path class="f" d="M10 0l4 5H6zM10 20l4-5H6zM0 10l5-4v8zM20 10l-5-4v8z"/></svg></button>
                        <button aria-label="旋转"><svg viewBox="0 0 20 20"><path d="M9 3Q2 4 2 11q1 8 8 8t9-8q0-4-3-6" stroke-width="2"/><path class="f" d="M8 0l6 3l-6 4z"/></svg></button>
                        <button aria-label="缩放"><svg viewBox="0 0 20 20"><path class="b" d="M1 6V1h18v18h-6"/><path d="M1 10h10v9H1z"/></svg></button>
                        <button aria-label="拉伸"><svg viewBox="0 0 20 20"><path d="M9 12V1H1v17h8v-3M5 14h10M12 11l3 3l-3 3"/><path class="b" d="M12 1l7 17h-5" stroke-dasharray="3 1"/></svg></button>
                        <button aria-label="修剪"><svg viewBox="0 0 20 20"><path class="b" d="M0 1h20" stroke-dasharray="4 2"/><path d="M9 0l5 14M6 9l11 4" stroke="#fff" stroke-width="3"/><g stroke="#fff" stroke-width="2"><circle cx="12" cy="17" r="2"/><circle cx="17" cy="14" r="2"/></g></svg></button>
                        <button aria-label="延伸"><svg viewBox="0 0 20 20"><path d="M0 9h13M11 6l4 3l-4 3M19 2v16"/><path class="b" d="M0 14h18" stroke-dasharray="3 1"/></svg></button>
                        <button aria-label="打断于点"><svg viewBox="0 0 20 20"><path d="M12 4H1v13h18V4h-3"/><path class="b" d="M14 1v7"/></svg></button>
                        <button aria-label="打断"><svg viewBox="0 0 20 20"><path d="M6 5H1v12h18V5h-5"/><path class="b" d="M7 1v6M13 1v6"/></svg></button>
                        <button aria-label="合并"><svg viewBox="0 0 20 20"><path d="M0 10h6M14 10h6"/><path class="bf" d="M5 6l5 4l-5 4zM15 6l-5 4l5 4z"/></svg></button>
                        <button aria-label="倒角"><svg viewBox="0 0 20 20"><path d="M1 19v-6M14 2h6"/><path class="b" d="M1 13L13 3"/></svg></button>
                        <button aria-label="圆角"><svg viewBox="0 0 20 20"><path d="M1 19v-7M13 2h7"/><path class="b" d="M1 12Q1 2 12 2"/></svg></button>
                        <button aria-label="光顺曲线"><svg viewBox="0 0 20 20"><path d="M1 19q0-7 2-11M19 1q0 7-3 11"/><path class="b" d="M3 9q4-3 6 3t7 3"/></svg></button>
                        <button aria-label="分解"><svg viewBox="0 0 20 20"><path d="M4 8h9v9H4z"/><path class="b" d="M1 5h14v14H1zM3 4l5-4h11l-4 4M17 6l3-4v12l-3 3"/></svg></button>
                    </div>
                    <div class="vbar vbar-order">
                        <button aria-label="前置"><svg viewBox="0 0 20 20"><path class="f" d="M1 2h9v3H1zM12 15h7v4h-7z"/><path class="bf" d="M4 5h12v10H4z"/></svg></button>
                        <button aria-label="后置"><svg viewBox="0 0 20 20"><path class="bf" d="M4 7h12v8H4z"/><path class="f" d="M1 2h9v5H1zM11 14h8v5h-8z"/></svg></button>
                        <button aria-label="置于对象之上"><svg viewBox="0 0 20 20"><path class="f" d="M1 2h9v7H1z"/><path class="bf" d="M7 6h13v10H7z"/></svg></button>
                        <button aria-label="置于对象之下"><svg viewBox="0 0 20 20"><path class="bf" d="M8 8h12v10H8z"/><path class="g" d="M0 2h12v10H0z"/></svg></button>
                        <i class="hsep"></i>
                        <button aria-label="文字前置"><svg viewBox="0 0 20 20"><path class="g" d="M5 8h15v9H5z"/><path class="b" d="M1 8l2-6l2 6M8 2v6h3V2zM17 2h-3v6h3"/></svg></button>
                        <button aria-label="图案填充后置"><svg viewBox="0 0 20 20"><path class="g" d="M0 1h13v10H0z"/><path d="M8 8h11v11H8zM6 17h14M17 6v14"/><path class="b" d="M10 16l6-6"/></svg></button>
                    </div>
                </div>
            </div>

            <footer class="command">
                <div class="command-grip">
                    <svg viewBox="0 0 26 57"><path d="M1 7h22M1 11h22" stroke="#bbb" stroke-width="2" stroke-dasharray="2 2"/><path d="M6 23l10 10M16 23L6 33" stroke="#fff" stroke-width="3"/><path d="M4 50l6 2l-1-4q5 0 5 6l8 8" stroke="#ddd" stroke-width="4"/></svg>
                </div>
                <div class="command-body">
                    <div class="history">命令:<br>命令: _saveas</div>
                    <div class="entry">
                        <svg viewBox="0 0 18 18"><rect width="18" height="18" rx="2" fill="#c9ced6"/><path d="M4 5l4 4l-4 4" stroke="#667" stroke-width="2"/></svg>
                        <input type="text" placeholder="键入命令" aria-label="键入命令">
                    </div>
                </div>
            </footer>
        </div>

        <aside class="dock">
            <div class="dock-head"><svg viewBox="0 0 10 14"><path d="M1 1v10M4 2v12M7 1v10" stroke="#333" stroke-dasharray="1 1"/></svg></div>
            <button aria-label="搜索"><svg viewBox="0 0 34 40"><ellipse cx="17" cy="19" rx="14" ry="16"/><path d="M26 30l6 7M8 16q2-6 7-7M21 27q3-1 5-4"/></svg></button>
            <button aria-label="分类查询"><svg viewBox="0 0 34 40" stroke="#2b76ad"><path d="M1 2h13v15H1zM19 2h13v15H19zM1 23h13v15H1z"/><ellipse cx="25" cy="30" rx="6" ry="7"/><path d="M29 35l4 4"/></svg></button>
            <button aria-label="打印"><svg viewBox="0 0 34 40" stroke-width="3"><path d="M10 12V6h16v6M9 28H5V13h26v15h-4M10 21h16v13H10z"/></svg></button>
            <button aria-label="裁剪"><svg viewBox="0 0 34 40" stroke-width="3"><path d="M6 3l15 22M29 3L14 25" stroke-width="5"/><ellipse cx="10" cy="30" rx="5" ry="6"/><ellipse cx="25" cy="30" rx="5" ry="6"/></svg></button>
            <button aria-label="复制"><svg viewBox="0 0 34 40"><path d="M14 3h11l6 7v17q0 4-4 4H14q-4 0-4-4V7q0-4 4-4zM16 17h9M16 23h9"/><path d="M7 8q-4 0-4 4v20q0 4 4 4h15q3 0 3-3" stroke-dasharray="9 2"/></svg></button>
            <button aria-label="添加图片"><svg viewBox="0 0 34 40"><path d="M22 5H3v30h27V17M3 28q6 4 9-2t8 0q4 2 5-5t5-1"/><g stroke="#f0d52a"><circle cx="10" cy="15" r="3"/><path d="M29 2v10M24 7h9"/></g></svg></button>
            <button aria-label="计算"><svg viewBox="0 0 34 40"><g fill="#0e8fe0" stroke="none"><rect x="0" y="1" width="15" height="17" rx="2"/><rect x="19" y="1" width="15" height="17" rx="2"/><rect x="0" y="22" width="15" height="17" rx="2"/><rect x="19" y="22" width="15" height="17" rx="2"/></g><path d="M7 5v9M3 10h9M22 10h9M4 27l7 8M11 27l-7 8M22 28h9M22 33h9" stroke="#24475e"/></svg></button>
            <button aria-label="删除"><svg viewBox="0 0 34 40" stroke="#d6380f" stroke-width="3"><path d="M2 8h30M11 8q0-6 6-6t6 6M5 8v23q0 6 5 6h14q5 0 5-6V8M12 17v12M17 17v12M22 17v12"/></svg></button>
            <button aria-label="视频"><svg viewBox="0 0 34 40" stroke="none"><path d="M4 3Q17-3 29 3q6 3 5 17q-2 16-17 20Q2 36 0 22Q-1 6 4 3z" fill="#a5d8ee"/><rect x="8" y="10" width="18" height="19" rx="3" fill="#f4fbff"/><path d="M14 16l7 4l-7 5z" fill="#1b78b0"/><path d="M10 13v14M24 13v14" stroke="#7fc3e4" stroke-dasharray="3 2"/></svg></button>
        </aside>
    </div>
</body>
</html>
```
FILE: styles.css
```css
* {
    box-sizing: border-box;
}

body {
    margin: 0;
    height: 100vh;
    overflow: hidden;
    display: flex;
    flex-direction: column;
    position: relative;
    background-color: #5c5c5c;
    font-family: "Noto Sans", "Noto Sans CJK SC", sans-serif;
    font-size: 16px;
    color: #fff;
    fill: none;
}

button {
    padding: 0;
    border: none;
    background: none;
    color: inherit;
    font: inherit;
    display: flex;
    align-items: center;
    justify-content: center;
    cursor: pointer;
}

svg {
    display: block;
}

/* top */
.menu-edge {
    height: 5px;
    background-color: #606060;
}

.menu-edge path {
    stroke: #e8e8e8;
    stroke-width: 2;
}

.top {
    display: flex;
    height: 60px;
    flex: none;
}

.grip {
    width: 18px;
    background-color: #494949;
}

.quick {
    display: flex;
    align-items: center;
    width: 1186px;
    padding-left: 5px;
    padding-bottom: 3px;
    background-color: #404040;
}

.quick button {
    width: 53px;
}

.quick button svg {
    width: 42px;
    height: 50px;
    overflow: visible;
}

.switch {
    display: flex;
    align-items: center;
    gap: 8px;
    margin-left: 7px;
    font-size: 24px;
    line-height: 32px;
}

.switch input {
    position: absolute;
    opacity: 0;
}

.track {
    width: 50px;
    height: 31px;
    border-radius: 16px;
    background: radial-gradient(circle at 15px 50%, #ff2200 15px, #fff 16px);
}

.side-tab {
    width: 26px;
    margin-right: 4px;
    padding-top: 12px;
    margin-top: 21px;
    border-top: 2px solid #333;
    border-right: 2px solid #333;
    border-radius: 0 5px 0 0;
    overflow: hidden;
    display: flex;
    justify-content: center;
    align-items: flex-start;
}

.side-tab span {
    writing-mode: vertical-rl;
    text-orientation: sideways;
    transform: rotate(180deg);
    font-size: 14px;
    line-height: 20px;
    white-space: nowrap;
}

.files {
    flex: 1;
}

.file-strip {
    display: flex;
    align-items: center;
    height: 31px;
    padding-left: 16px;
    background-color: #383838;
    position: relative;
}

.file-tab {
    position: relative;
    display: flex;
    align-items: center;
    width: 174px;
    height: 27px;
    margin-top: 4px;
    padding-left: 25px;
    color: #fff;
    font-size: 15px;
    text-decoration: none;
}

.file-tab span {
    position: relative;
}

.tab-shape {
    position: absolute;
    left: 0;
    top: 0;
    width: 100%;
    height: 100%;
}

.close {
    position: relative;
    margin-left: -34px;
    margin-right: 26px;
}

.close svg {
    width: 10px;
    height: 10px;
}

.plus {
    width: 26px;
    height: 20px;
    margin-top: 3px;
    background-color: #4e4e4e;
    border-radius: 4px 10px 3px 8px;
}

.plus svg {
    width: 12px;
    height: 12px;
}

/* input method bar floats over the window */
.ime {
    position: absolute;
    top: 45px;
    right: 166px;
    display: flex;
    align-items: center;
    height: 38px;
    padding-right: 3px;
    border-radius: 7px;
    background-color: #fff;
    color: #111;
}

.ime button {
    width: 38px;
    height: 26px;
}

.ime .narrow {
    width: 34px;
}

.ime .logo {
    width: 48px;
    border-right: 1px solid #ccc;
}

.ime svg {
    width: 20px;
    height: 20px;
}

.ime .logo svg,
.ime button:last-child svg {
    width: 24px;
    height: 24px;
}

.ime .lang {
    font-size: 19px;
    font-weight: 500;
}

/* toolbars */
.toolbars {
    display: flex;
    flex-direction: column;
    align-items: flex-start;
    gap: 3px;
    padding: 3px 0 4px;
    flex: none;
}

.bar {
    display: flex;
    align-items: center;
    height: 30px;
    padding-left: 7px;
    border: 1px solid #303030;
    border-width: 1px 1px 1px 0;
    background-color: #606060;
}

.bar button {
    width: 29px;
    height: 28px;
}

.bar button.drop {
    width: 16px;
}

.bar svg,
.vbar svg {
    width: 20px;
    height: 20px;
    stroke: #d4d4d4;
    stroke-width: 1.5;
}

.bar .drop svg {
    width: 10px;
    height: 10px;
}

.f {
    fill: #f2f2f2;
    stroke: none;
}

.g {
    fill: #cfcfcf;
    stroke: none;
}

.b {
    stroke: #6fb4e6;
}

.bf {
    fill: #72b8ec;
    stroke: none;
}

.o {
    fill: #e8b872;
    stroke: none;
}

.sep {
    width: 2px;
    height: 26px;
    margin: 0 2px;
    border-left: 1px solid #252525;
    border-right: 1px solid #9a9a9a;
}

.sep.wide {
    margin: 0 5px;
}

.combo {
    position: relative;
    width: 150px;
    height: 28px;
}

.combo select {
    width: 100%;
    height: 100%;
    padding: 0 25px;
    border: none;
    border-radius: 0;
    appearance: none;
    background-color: #fdfdfd;
    color: #111;
    font: inherit;
}

.combo::after {
    content: "";
    position: absolute;
    right: 7px;
    top: 8px;
    width: 7px;
    height: 7px;
    border-right: 1px solid #444;
    border-bottom: 1px solid #444;
    transform: rotate(45deg);
}

.combo.near select {
    padding-left: 7px;
}

.bar-layer .combo {
    height: 26px;
}

.bar-layer .layers {
    width: 375px;
}

.layers select {
    padding-left: 107px;
}

.bar .layer-state {
    position: absolute;
    left: 7px;
    top: 2px;
    width: 96px;
    height: 22px;
    stroke-width: 1;
}

.bar-layer .color {
    width: 188px;
}

.color select {
    padding-left: 25px;
}

.swatch {
    position: absolute;
    left: 8px;
    top: 7px;
    width: 13px;
    height: 13px;
    border: 1px solid #000;
}

.bar-layer .linetype {
    width: 200px;
}

.linetype select {
    padding-left: 89px;
}

.bar-layer .weight {
    width: 156px;
}

.weight select {
    padding-left: 57px;
}

.combo .stroke {
    position: absolute;
    left: 6px;
    top: 12px;
    width: 44px;
    height: 1px;
    background-color: #000;
}

.combo.linetype .stroke {
    width: 75px;
    height: 2px;
}

.combo.plot select {
    padding-left: 14px;
    color: #8c8c8c;
    opacity: 1;
}

.combo.plot::after {
    border-color: #bbb;
}

/* lower part */
.lower {
    flex: 1;
    min-height: 0;
    display: flex;
}

.left-part {
    flex: 1;
    min-width: 0;
    display: flex;
    flex-direction: column;
}

.workspace {
    flex: 1;
    min-height: 0;
    display: flex;
    padding-bottom: 3px;
}

.draw-side {
    width: 32px;
}

.modify-side {
    width: 41px;
    padding-left: 4px;
    display: flex;
    flex-direction: column;
    gap: 2px;
}

.vbar {
    width: 30px;
    border: 1px solid #303030;
    background-color: #606060;
}

.vbar button {
    width: 28px;
    height: 28px;
}

.vbar-draw {
    width: 28px;
    padding-top: 10px;
    border-left: none;
}

.vbar-draw button {
    width: 24px;
}

.vbar-modify {
    padding-top: 9px;
}

.vbar-order {
    padding-top: 10px;
}

.hsep {
    display: block;
    height: 1px;
    margin: 2px;
    background-color: #eee;
}

.view {
    flex: 1;
    min-width: 0;
    display: flex;
    flex-direction: column;
}

.view-row {
    flex: 1;
    min-height: 0;
    display: flex;
}

.canvas {
    position: relative;
    flex: 1;
    min-width: 0;
    overflow: hidden;
    background-color: #202830;
}

.plan {
    width: 100%;
    height: 100%;
}

.view-controls {
    position: absolute;
    left: 3px;
    top: 3px;
    display: flex;
    line-height: 24px;
}

.vscroll {
    width: 21px;
    background-color: #efefef;
    display: flex;
    justify-content: center;
}

.vscroll span {
    width: 3px;
    height: 21px;
    margin-top: 871px;
    background-color: #858585;
}

.hscroll {
    height: 21px;
    border-top: 1px solid #fff;
    background-color: #efefef;
}

.hscroll span {
    display: block;
    width: 21px;
    height: 3px;
    margin: 8px 0 0 1688px;
    border-radius: 1px;
    background-color: #858585;
}

/* drawing */
.frame,
.cross {
    stroke: #fff;
}

.pipes path {
    vector-effect: non-scaling-stroke;
    stroke-width: 1;
}

.pipes .double {
    stroke-width: 2;
}

.pipes .thick {
    stroke-width: 3;
}

.pipes .lab {
    stroke-width: 6;
}

.pipes .dots {
    stroke-width: 3;
    stroke-dasharray: 2 13;
}

.red {
    stroke: #ee1f0e;
}

.cyan {
    stroke: #18a4ef;
}

.green {
    stroke: #14cc18;
}

.yellow {
    stroke: #ffb412;
}

.magenta {
    stroke: #e93aea;
}

.brown {
    stroke: #a9705f;
}

.pipes .box {
    stroke: none;
}

.red.box {
    fill: #f71c08;
}

.cyan.box {
    fill: #18a4ef;
}

.green.box {
    fill: #0dd411;
}

.yellow.box {
    fill: #ffb412;
}

.magenta.box {
    fill: #e93aea;
}

.brown.box {
    fill: #a9705f;
}

.sheet-name {
    position: absolute;
    width: 11px;
    margin: 0;
    font-size: 11px;
    line-height: 14px;
    word-break: break-all;
}

.sheet-left {
    left: 309px;
    top: 1019px;
}

.sheet-right {
    left: 1657px;
    top: 1006px;
}

/* command line */
.command {
    display: flex;
    height: 57px;
    flex: none;
    margin-right: 3px;
    overflow: hidden;
}

.command-grip {
    width: 26px;
    background: linear-gradient(#808080, #484848);
}

.command-grip svg {
    width: 26px;
    height: 57px;
}

.command-body {
    flex: 1;
    border: 1px solid #777;
    border-bottom: none;
}

.history {
    height: 43px;
    padding: 4px 3px;
    background-color: #c8c8c8;
    color: #111;
    font-family: "DejaVu Sans Mono", "Noto Sans CJK SC", monospace;
    font-size: 15px;
    line-height: 19px;
}

.entry {
    display: flex;
    align-items: flex-start;
    gap: 24px;
    height: 30px;
    padding: 4px 5px;
    border-top: 1px solid #777;
    background-color: #fff;
}

.entry svg {
    width: 18px;
    height: 18px;
}

.entry input {
    flex: 1;
    height: 20px;
    padding: 0;
    border: none;
    outline: none;
    font: italic 16px/20px "Noto Sans CJK SC", sans-serif;
}

.entry input::placeholder {
    color: #999;
}

/* dock */
.dock {
    width: 52px;
    margin-top: 4px;
    border-right: 2px solid #1c1c1c;
    background-color: #404040;
    stroke: #1488d4;
    stroke-width: 2;
}

.dock-head {
    height: 28px;
    padding: 5px;
    border-bottom: 2px solid #666;
    border-radius: 4px 0 0 0;
    background-color: #505050;
}

.dock-head svg {
    width: 10px;
    height: 14px;
}

.dock button {
    width: 50px;
    height: 68px;
}

.dock button svg {
    width: 34px;
    height: 40px;
}
```
